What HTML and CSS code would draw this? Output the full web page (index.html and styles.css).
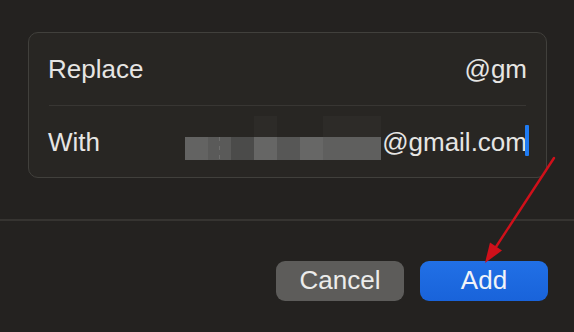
FILE: index.html
```html
<!DOCTYPE html>
<html>
<head>
<meta charset="utf-8">
<link rel="stylesheet" href="styles.css">
</head>
<body>
<div class="page">
  <div class="panel">
    <div class="card">
      <div class="row row-top">
        <span class="label">Replace</span>
        <span class="value">@gm</span>
      </div>
      <div class="sep"></div>
      <div class="row row-bottom">
        <span class="label">With</span>
        <span class="value"><span class="redact"><span class="cells"><span class="c u0"></span><span class="c u0"></span><span class="c u0"></span><span class="c u1"></span><span class="c u0"></span><span class="c u0"></span><span class="c u1"></span><span class="c u1"></span><span class="c u1"></span><span class="c l1"></span><span class="c l2"><i class="dash"></i></span><span class="c l3"></span><span class="c l4"></span><span class="c l5"></span><span class="c l6"></span><span class="c l7"></span><span class="c l7"></span><span class="c l7"></span></span></span>@gmail.com<span class="caret"></span></span>
      </div>
    </div>
  </div>
  <div class="divider"></div>
  <div class="actions">
    <button class="btn btn-cancel">Cancel</button>
    <button class="btn btn-add">Add</button>
  </div>
  <svg class="arrow" width="574" height="332" viewBox="0 0 574 332">
    <line x1="554" y1="158" x2="492" y2="253" stroke="#d0101a" stroke-width="2.4" stroke-linecap="round"/>
    <polygon points="485,263 490,242.5 502,250.5" fill="#d0101a"/>
  </svg>
</div>
</body>
</html>
```
FILE: styles.css
```css
html, body {
  margin: 0;
  padding: 0;
  background: #242220;
}
body {
  font-family: "Liberation Sans", Arial, sans-serif;
  color: #e6e5e3;
}
.page {
  position: relative;
  width: 574px;
  height: 332px;
  overflow: hidden;
  background: #242220;
}
.panel {
  padding: 32px 27px 0 28px;
}
.card {
  background: #282623;
  border: 1px solid #41403c;
  border-radius: 10px;
  padding: 0 20px 0 19px;
}
.row {
  display: flex;
  align-items: center;
  justify-content: space-between;
  font-size: 26px;
}
.row-top {
  height: 72px;
}
.row-bottom {
  height: 69px;
  padding-top: 2px;
}
.value {
  white-space: nowrap;
  margin-right: -1px;
}
.sep {
  height: 1px;
  margin-left: 1px;
  background: #383633;
}
.redact {
  display: inline-block;
  overflow: hidden;
  width: 196px;
  height: 44px;
  margin-top: -15px;
  margin-bottom: -4px;
  margin-right: 1px;
  vertical-align: -5px;
}
.cells {
  display: grid;
  grid-template-columns: repeat(8, 23px) 12px;
  grid-template-rows: 21px 23px;
  width: 196px;
  height: 44px;
}
.c { display: block; position: relative; }
.u0 { background: #282623; }
.u1 { background: #2d2b28; }
.l1 { background: #636362; }
.l2 { background: #5a5a59; }
.l3 { background: #4b4b4a; }
.l4 { background: #666665; }
.l5 { background: #575756; }
.l6 { background: #676766; }
.l7 { background: #5f5f5e; }
.dash {
  position: absolute;
  left: 11px;
  top: 0;
  width: 1px;
  height: 23px;
  background: repeating-linear-gradient(#6e6e6d 0 4px, transparent 4px 9px);
}
.caret {
  display: inline-block;
  overflow: hidden;
  width: 3.5px;
  height: 31px;
  margin-left: -2px;
  margin-right: -1.5px;
  margin-top: -4px;
  margin-bottom: -1px;
  vertical-align: -4px;
  background: #1f7bf2;
  border-radius: 1px;
}
.divider {
  margin-top: 41px;
  height: 2px;
  background: #363431;
}
.actions {
  display: flex;
  justify-content: flex-end;
  gap: 16px;
  padding: 40px 26px 0 0;
}
.btn {
  width: 128px;
  height: 40px;
  border: none;
  border-radius: 9px;
  font-family: "Liberation Sans", Arial, sans-serif;
  font-size: 26px;
  line-height: 36px;
  padding: 0 0 3px 0;
  color: #ececeb;
}
.btn-cancel {
  background: #5d5c5a;
}
.btn-add {
  background: linear-gradient(#2170e6, #1963da);
  color: #f1f3f8;
}
.arrow {
  position: absolute;
  left: 0;
  top: 0;
  pointer-events: none;
}
```
